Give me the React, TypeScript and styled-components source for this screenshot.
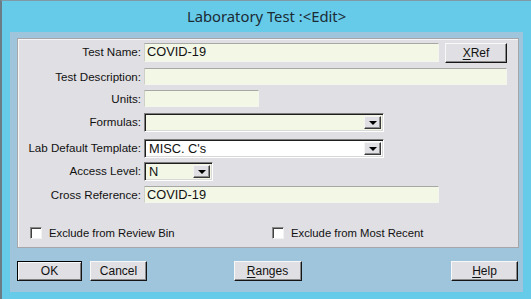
import React from "react";
import styled, { createGlobalStyle } from "styled-components";

const GlobalStyle = createGlobalStyle`
  html, body { margin: 0; padding: 0; overflow: hidden; background: #66cbe9; }
  * { box-sizing: border-box; }
`;

const Window = styled.div`
  width: 531px;
  height: 299px;
  background: #66cbe9;
  border-left: 2px solid #6c7c86;
  border-top: 1px solid #7f9aa6;
  display: flex;
  flex-direction: column;
`;

const TitleBar = styled.div`
  height: 31px;
  display: flex;
  align-items: center;
  justify-content: center;
  font-family: "Noto Sans", "Open Sans", sans-serif;
  font-size: 14.8px;
  color: #1b2a34;
  padding-bottom: 1px;
`;

const Frame = styled.div`
  margin-left: 8px;
  width: 513px;
  height: 260px;
  background: #9fc5dc;
  padding: 6px 4px 0 7px;
  display: flex;
  flex-direction: column;
`;

const Panel = styled.div`
  height: 210px;
  background: #e0dfe3;
  border: 1px solid #a4a6aa;
  box-shadow: inset 1px 1px 0 #f6f6f8;
  padding-top: 4px;
  display: flex;
  flex-direction: column;
  font-family: "Liberation Sans", Arial, sans-serif;
  font-size: 11.6px;
  color: #111;
`;

const FormGrid = styled.div`
  display: grid;
  grid-template-columns: 123px 1fr;
  grid-template-rows: 25px 22px 23px 26px 23px 24px 18px;
  column-gap: 3px;
`;

const Label = styled.div`
  text-align: right;
  align-self: start;
  line-height: 18px;
  white-space: nowrap;
`;

const FieldRow = styled.div`
  display: flex;
  align-items: flex-start;
  gap: 6px;
`;

const Edit = styled.div<{ $w: number; $h?: number }>`
  width: ${(p) => p.$w}px;
  height: ${(p) => p.$h ?? 18}px;
  background: #f3f8e6;
  border-top: 1px solid #a6a8a6;
  border-left: 1px solid #cdd0c8;
  border-right: 1px solid #f4f6ee;
  border-bottom: 1px solid #f4f6ee;
  font-size: 12.8px;
  line-height: 16px;
  padding-left: 2px;
  color: #111;
`;

const Combo = styled.div<{ $w: number; $bg: string }>`
  width: ${(p) => p.$w}px;
  height: 19px;
  background: ${(p) => p.$bg};
  border-top: 1px solid #7c7c7c;
  border-left: 1px solid #7c7c7c;
  border-right: 1px solid #ffffff;
  border-bottom: 1px solid #ffffff;
  box-shadow: inset 1px 1px 0 #1e1e1e, inset -1px -1px 0 #d8d8d8;
  display: flex;
  align-items: stretch;
  padding: 2px 2px 2px 3px;
`;

const ComboText = styled.div`
  flex: 1;
  font-size: 12.8px;
  line-height: 14px;
  padding-left: 1px;
  color: #111;
`;

const ComboButton = styled.div`
  width: 17px;
  background: #e0dfe3;
  border-top: 1px solid #f4f4f4;
  border-left: 1px solid #f4f4f4;
  border-right: 1px solid #3a3a3a;
  border-bottom: 1px solid #3a3a3a;
  box-shadow: inset -1px -1px 0 #8a8a8a;
  display: flex;
  align-items: center;
  justify-content: center;
`;

const Arrow = styled.div`
  width: 0;
  height: 0;
  border-left: 4px solid transparent;
  border-right: 4px solid transparent;
  border-top: 4px solid #000;
  margin-top: 1px;
`;

const Button = styled.button<{ $w: number; $default?: boolean }>`
  width: ${(p) => p.$w}px;
  height: 20px;
  background: #e0dfe3;
  font-family: "Liberation Sans", Arial, sans-serif;
  font-size: 12px;
  color: #111;
  padding: 0;
  border-top: 1px solid ${(p) => (p.$default ? "#000" : "#f8f8f8")};
  border-left: 1px solid ${(p) => (p.$default ? "#000" : "#f8f8f8")};
  border-right: 1px solid #151515;
  border-bottom: 1px solid #151515;
  box-shadow: ${(p) =>
    p.$default
      ? "inset 1px 1px 0 #f8f8f8, inset -1px -1px 0 #808080"
      : "inset -1px -1px 0 #8a8a8a"};
  display: flex;
  align-items: center;
  justify-content: center;
  line-height: 14px;
`;

const Key = styled.span`
  text-decoration: underline;
  text-underline-offset: 2px;
`;

const CheckRow = styled.div`
  display: flex;
  margin-top: 23px;
  padding-left: 12px;
`;

const CheckItem = styled.div<{ $w?: number }>`
  display: flex;
  align-items: center;
  gap: 7px;
  width: ${(p) => (p.$w ? `${p.$w}px` : "auto")};
  font-size: 11.3px;
`;

const CheckBox = styled.div`
  width: 12px;
  height: 12px;
  background: #fff;
  border-top: 1px solid #8a8a8a;
  border-left: 1px solid #8a8a8a;
  border-right: 1px solid #f2f2f2;
  border-bottom: 1px solid #f2f2f2;
  box-shadow: inset 1px 1px 0 #404040;
`;

const ButtonRow = styled.div`
  margin-top: 13px;
  display: grid;
  grid-template-columns: 1fr auto 1fr;
  align-items: start;
  padding-right: 1px;
`;

const LeftGroup = styled.div`
  display: flex;
  gap: 8px;
`;

const RightGroup = styled.div`
  display: flex;
  justify-content: flex-end;
`;

export default function App() {
  return (
    <>
      <GlobalStyle />
      <Window>
        <TitleBar>Laboratory Test :&lt;Edit&gt;</TitleBar>
        <Frame>
          <Panel>
            <FormGrid>
              <Label>Test Name:</Label>
              <FieldRow>
                <Edit $w={295} $h={19}>COVID-19</Edit>
                <Button $w={62}>
                  <Key>X</Key>Ref
                </Button>
              </FieldRow>

              <Label>Test Description:</Label>
              <FieldRow>
                <Edit $w={363} $h={17} />
              </FieldRow>

              <Label>Units:</Label>
              <FieldRow>
                <Edit $w={115} $h={17} />
              </FieldRow>

              <Label>Formulas:</Label>
              <FieldRow>
                <Combo $w={240} $bg="#f3f8e6">
                  <ComboText />
                  <ComboButton>
                    <Arrow />
                  </ComboButton>
                </Combo>
              </FieldRow>

              <Label>Lab Default Template:</Label>
              <FieldRow>
                <Combo $w={240} $bg="#ffffff">
                  <ComboText>MISC. C's</ComboText>
                  <ComboButton>
                    <Arrow />
                  </ComboButton>
                </Combo>
              </FieldRow>

              <Label>Access Level:</Label>
              <FieldRow>
                <Combo $w={69} $bg="#f3f8e6">
                  <ComboText>N</ComboText>
                  <ComboButton>
                    <Arrow />
                  </ComboButton>
                </Combo>
              </FieldRow>

              <Label>Cross Reference:</Label>
              <FieldRow>
                <Edit $w={295} $h={17}>COVID-19</Edit>
              </FieldRow>
            </FormGrid>

            <CheckRow>
              <CheckItem $w={242}>
                <CheckBox />
                Exclude from Review Bin
              </CheckItem>
              <CheckItem>
                <CheckBox />
                Exclude from Most Recent
              </CheckItem>
            </CheckRow>
          </Panel>

          <ButtonRow>
            <LeftGroup>
              <Button $w={65} $default>
                OK
              </Button>
              <Button $w={57}>Cancel</Button>
            </LeftGroup>
            <Button $w={68}>
              <Key>R</Key>anges
            </Button>
            <RightGroup>
              <Button $w={67}>
                <Key>H</Key>elp
              </Button>
            </RightGroup>
          </ButtonRow>
        </Frame>
      </Window>
    </>
  );
}
